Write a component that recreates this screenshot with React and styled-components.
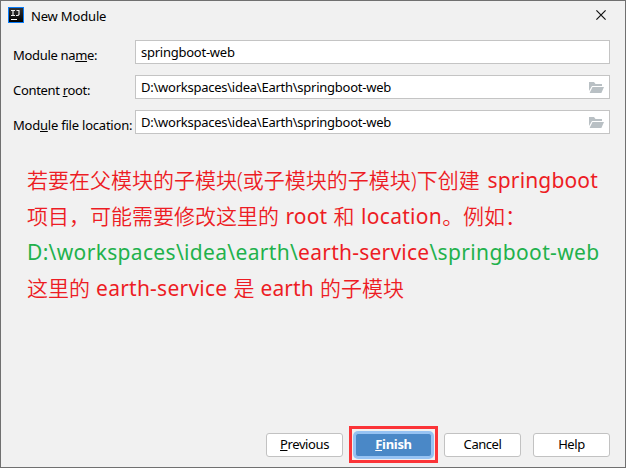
import React from "react";
import styled, { createGlobalStyle } from "styled-components";

const GlobalStyle = createGlobalStyle`
  * { box-sizing: border-box; }
  body { margin: 0; overflow: hidden; }
`;

const Dialog = styled.main`
  width: 626px;
  height: 468px;
  display: flex;
  flex-direction: column;
  background: #f1f1f1;
  border: 1px solid #707070;
  color: #000;
  font: 13px/18px "Noto Sans", "Noto Sans CJK SC", sans-serif;
`;

const TitleBar = styled.header`
  height: 28px;
  flex: none;
  display: flex;
  align-items: center;
  padding: 0 19px 0 7px;
`;

const Title = styled.h1`
  flex: 1;
  margin: 1px 0 0 7px;
  font-size: 13px;
  font-weight: 400;
  letter-spacing: -0.17px;
`;

const Form = styled.form`
  display: grid;
  grid-template-columns: 122px 475px;
  row-gap: 11px;
  padding: 11px 0 0 12px;
`;

const Label = styled.label`
  padding-top: 6px;
  white-space: nowrap;
  letter-spacing: ${(p) => p.$spacing}px;
`;

const Field = styled.div`
  height: 24px;
  display: flex;
  align-items: center;
  justify-content: space-between;
  padding: 0 5px;
  background: #fff;
  border: 1px solid #c4c4c4;
`;

const Value = styled.span`
  line-height: 22px;
  letter-spacing: -0.25px;
`;

const Note = styled.section`
  flex: 1;
  padding: 28px 0 0 26px;
  color: #ed1c24;
  font-size: 21px;
  font-weight: 350;
  line-height: 36px;
`;

const Line = styled.p`
  height: 36px;
  margin: 0;
  white-space: pre;
  word-spacing: ${(p) => p.$gap || 0}px;
`;

const Run = styled.span`
  color: ${(p) => (p.$green ? "#22b14c" : "inherit")};
  font-weight: 400;
  letter-spacing: ${(p) => p.$spacing ?? 0.3}px;
`;

const Actions = styled.footer`
  display: flex;
  align-items: center;
  height: 37px;
  margin: 0 0 4px 265px;
`;

const Button = styled.button`
  width: 77px;
  height: 24px;
  padding: 0 0 1px;
  margin-right: ${(p) => p.$gap || 0}px;
  background: #fff;
  border: 1px solid #c2c2c2;
  border-radius: 3px;
  color: #000;
  font: inherit;
  letter-spacing: ${(p) => p.$spacing || 0}px;
`;

const PrimaryButton = styled(Button)`
  background: #4a88c7;
  border-color: #97c3f3;
  box-shadow: 0 0 0 2px #97c3f3;
  color: #fff;
  font-weight: 700;
`;

const Highlight = styled.div`
  width: 89px;
  height: 37px;
  display: flex;
  align-items: center;
  justify-content: center;
  margin-right: 6px;
  border: 3px solid #fb3438;
`;

const Icon = styled.svg`
  display: block;
  flex: none;
`;

const CloseIcon = styled(Icon)`
  margin-bottom: 1px;
`;

const Folder = styled(Icon)`
  margin-top: 2px;
`;

const FolderIcon = () => (
  <Folder width="15" height="12" viewBox="0 0 15 12" fill="#b9c0c4">
    <path d="M0 0h5l1.5 2H13v2H3L0 9z" />
    <path d="M3.5 5H15l-2.6 6H0.6z" />
  </Folder>
);

const fields = [
  { before: "Module na", key: "m", after: "e:", spacing: -0.32, value: "springboot-web", folder: false },
  { before: "Content ", key: "r", after: "oot:", spacing: -0.32, value: "D:\\workspaces\\idea\\Earth\\springboot-web", folder: true },
  { before: "Mod", key: "u", after: "le file location:", spacing: -0.22, value: "D:\\workspaces\\idea\\Earth\\springboot-web", folder: true },
];

export default function App() {
  return (
    <Dialog>
      <GlobalStyle />
      <TitleBar>
        <Icon width="16" height="16" viewBox="0 0 16 16">
          <defs>
            <linearGradient id="tile" x2="0" y2="1">
              <stop stopColor="#333" />
              <stop offset="1" stopColor="#000" />
            </linearGradient>
          </defs>
          <rect x=".5" y=".5" width="15" height="15" fill="url(#tile)" stroke="#087cfa" />
          <path d="M3 3.5h4M5 3.5v5M3 8.5h4M8.5 3.5h3M11 3.5v4L10 8.5H8" fill="none" stroke="#eee" strokeWidth="1.2" />
          <path d="M3 12.5h6" stroke="#fff" />
        </Icon>
        <Title>New Module</Title>
        <CloseIcon width="10" height="10" viewBox="0 0 10 10">
          <path d="M.4.4l9.2 9.2M9.6.4L.4 9.6" stroke="#111" strokeWidth="1.2" />
        </CloseIcon>
      </TitleBar>
      <Form>
        {fields.map((f) => (
          <React.Fragment key={f.before}>
            <Label $spacing={f.spacing}>{f.before}<u>{f.key}</u>{f.after}</Label>
            <Field>
              <Value>{f.value}</Value>
              {f.folder && <FolderIcon />}
            </Field>
          </React.Fragment>
        ))}
      </Form>
      <Note>
        <Line $gap={2.4}>若要在父模块的子模块(或子模块的子模块)下创建 <Run $spacing={0.15}>springboot</Run></Line>
        <Line $gap={1}>项目，可能需要修改这里的 <Run $spacing={0.1}>root</Run> 和 <Run>location</Run>。例如：</Line>
        <Line><Run $green $spacing={0.33}>D:\workspaces\idea\earth\</Run><Run $spacing={0.24}>earth-service</Run><Run $green $spacing={0.36}>\springboot-web</Run></Line>
        <Line $gap={0.6}>这里的 <Run $spacing={0.24}>earth-service</Run> 是 <Run $spacing={0.1}>earth</Run> 的子模块</Line>
      </Note>
      <Actions>
        <Button $gap={6} $spacing={-0.4}><u>P</u>revious</Button>
        <Highlight><PrimaryButton $spacing={-0.3}><u>F</u>inish</PrimaryButton></Highlight>
        <Button $gap={12} $spacing={-0.45}>Cancel</Button>
        <Button $spacing={-0.4}>Help</Button>
      </Actions>
    </Dialog>
  );
}
